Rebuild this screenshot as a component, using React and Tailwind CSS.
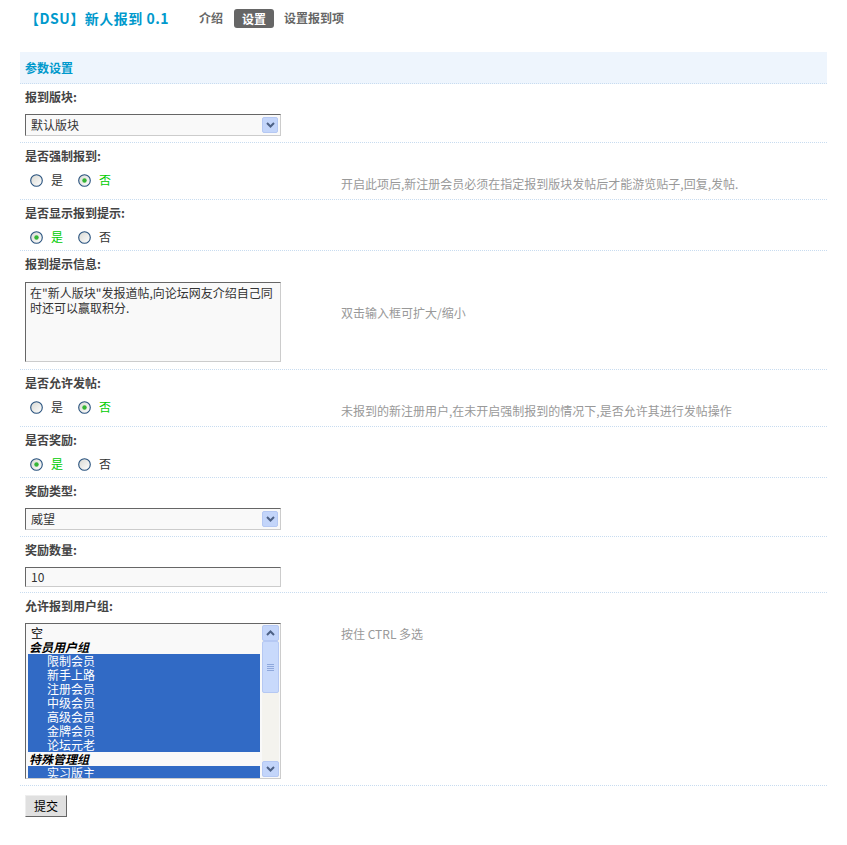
import React from "react";

const font = { fontFamily: '"Noto Sans CJK SC", "Noto Sans", sans-serif' };

const Radio = ({ checked }) => (
  <svg width="13" height="13" viewBox="0 0 13 13" className="shrink-0">
    <defs>
      <linearGradient id="rg" x1="0" y1="0" x2="1" y2="1">
        <stop offset="0" stopColor="#d8d8d2" />
        <stop offset="1" stopColor="#ffffff" />
      </linearGradient>
    </defs>
    <circle cx="6.5" cy="6.5" r="5.8" fill="url(#rg)" stroke="#27517d" strokeWidth="1.1" />
    {checked && <circle cx="6.5" cy="6.5" r="2.2" fill="#35b535" />}
  </svg>
);

const RadioPair = ({ value }) => (
  <div className="flex items-center h-[14px] pl-[5px] text-[12px] leading-[14px]">
    <Radio checked={value} />
    <span className={`ml-[8px] ${value ? "text-[#00cc00]" : "text-[#333]"}`}>是</span>
    <span className="ml-[15px]"><Radio checked={!value} /></span>
    <span className={`ml-[8px] ${!value ? "text-[#00cc00]" : "text-[#333]"}`}>否</span>
  </div>
);

const Select = ({ text }) => (
  <div className="relative w-[256px] h-[22px] bg-[#f9f9f9] border border-t-[#666] border-l-[#666] border-r-[#ccc] border-b-[#ccc] flex items-center pl-[5px] text-[12px] text-[#333]">
    {text}
    <div className="absolute right-[2px] top-[2px] w-[16px] h-[16px] rounded-[2px] bg-[#c3d5fa] border border-[#b5c8f3] flex items-center justify-center">
      <svg width="9" height="6" viewBox="0 0 9 6">
        <path d="M1 1 L4.5 4.5 L8 1" fill="none" stroke="#4d6185" strokeWidth="2" />
      </svg>
    </div>
  </div>
);

const Block = ({ label, children, desc, descPad = "pt-[8px] pb-[8px]" }) => (
  <div className="border-b border-dotted border-[#c8dcf0]">
    <div className="h-[26px] flex items-center pl-[5px] font-bold text-[12px] text-[#444]">{label}</div>
    <div className="flex items-start">
      <div className="w-[321px] pl-[5px] pt-[4px] pb-[6px] shrink-0">{children}</div>
      {desc && <div className={`${descPad} text-[12px] leading-[14px] text-[#999]`}>{desc}</div>}
    </div>
  </div>
);

const groups = [
  { type: "opt", text: "空" },
  { type: "group", text: "会员用户组" },
  { type: "sel", text: "限制会员" },
  { type: "sel", text: "新手上路" },
  { type: "sel", text: "注册会员" },
  { type: "sel", text: "中级会员" },
  { type: "sel", text: "高级会员" },
  { type: "sel", text: "金牌会员" },
  { type: "sel", text: "论坛元老" },
  { type: "group", text: "特殊管理组" },
  { type: "sel", text: "实习版主" },
];

const ScrollBtn = ({ up }) => (
  <div className="w-[17px] h-[16px] rounded-[2px] bg-[#c3d5fa] border border-[#b5c8f3] flex items-center justify-center shrink-0">
    <svg width="9" height="6" viewBox="0 0 9 6">
      <path d={up ? "M1 5 L4.5 1.5 L8 5" : "M1 1 L4.5 4.5 L8 1"} fill="none" stroke="#4d6185" strokeWidth="2" />
    </svg>
  </div>
);

const ListBox = () => (
  <div className="w-[256px] h-[156px] bg-[#f9f9f9] border border-t-[#666] border-l-[#666] border-r-[#ccc] border-b-[#ccc] flex overflow-hidden">
    <div className="flex-1 px-[2px] pt-[2px] overflow-hidden text-[12px] leading-[14px]">
      {groups.map((g, i) => {
        if (g.type === "group")
          return <div key={i} className="h-[14px] pl-[1px] font-bold italic text-black">{g.text}</div>;
        if (g.type === "sel")
          return <div key={i} className="h-[14px] pl-[19px] bg-[#316ac5] text-white">{g.text}</div>;
        return <div key={i} className="h-[14px] pl-[3px] text-black">{g.text}</div>;
      })}
    </div>
    <div className="w-[17px] mr-[1px] mt-[1px] mb-[1px] flex flex-col bg-[#f4f3ee]">
      <ScrollBtn up />
      <div className="h-[52px] rounded-[2px] bg-[#c8d9fb] border border-[#b5c8f3] flex flex-col items-center justify-center gap-[1px]">
        <div className="w-[7px] h-[1px] bg-[#8fa8dc]" />
        <div className="w-[7px] h-[1px] bg-[#8fa8dc]" />
        <div className="w-[7px] h-[1px] bg-[#8fa8dc]" />
        <div className="w-[7px] h-[1px] bg-[#8fa8dc]" />
      </div>
      <div className="flex-1" />
      <ScrollBtn />
    </div>
  </div>
);

export default function App() {
  return (
    <div className="w-full bg-white text-[12px]" style={font}>
      <div className="h-9 flex items-center pl-[25px]">
        <span className="text-[14px] font-bold text-[#0099cc] tracking-[0.5px]">【DSU】新人报到 0.1</span>
        <span className="ml-[30px] font-bold text-[#666]">介绍</span>
        <span className="ml-[11px] px-[8px] h-[19px] leading-[19px] rounded-[3px] bg-[#666] text-white font-bold">设置</span>
        <span className="ml-[10px] font-bold text-[#666]">设置报到项</span>
      </div>

      <div className="mx-[20px] mt-[16px]">
        <div className="h-[32px] bg-[#eef5fd] border-b border-dotted border-[#c8dcf0] flex items-center pl-[5px] font-bold text-[#0099cc]">
          参数设置
        </div>

        <Block label="报到版块:">
          <Select text="默认版块" />
        </Block>

        <Block label="是否强制报到:" desc="开启此项后,新注册会员必须在指定报到版块发帖后才能游览贴子,回复,发帖.">
          <RadioPair value={false} />
        </Block>

        <Block label="是否显示报到提示:">
          <RadioPair value={true} />
        </Block>

        <Block label="报到提示信息:" desc="双击输入框可扩大/缩小" descPad="pt-[29px]">
          <div className="pt-[1px] pb-[1px]">
            <div className="w-[256px] h-[80px] bg-[#f9f9f9] border border-t-[#666] border-l-[#666] border-r-[#ccc] border-b-[#ccc] px-[4px] pt-[2px] text-[12px] leading-[15px] text-[#333]">
              在"新人版块"发报道帖,向论坛网友介绍自己同时还可以赢取积分.
            </div>
          </div>
        </Block>

        <Block label="是否允许发帖:" desc="未报到的新注册用户,在未开启强制报到的情况下,是否允许其进行发帖操作">
          <RadioPair value={false} />
        </Block>

        <Block label="是否奖励:">
          <RadioPair value={true} />
        </Block>

        <Block label="奖励类型:">
          <Select text="威望" />
        </Block>

        <Block label="奖励数量:">
          <div className="-mb-[1px] w-[256px] h-[20px] bg-[#f9f9f9] border border-t-[#666] border-l-[#666] border-r-[#ccc] border-b-[#ccc] flex items-center pl-[5px] text-[12px] text-[#333]">
            10
          </div>
        </Block>

        <Block label="允许报到用户组:" desc="按住 CTRL 多选" descPad="pt-[8px]">
          <ListBox />
        </Block>

        <div className="pt-[9px] pl-[5px] pb-[28px]">
          <button className="w-[42px] h-[22px] bg-[#e0e0e0] border border-t-[#eee] border-l-[#eee] border-r-[#666] border-b-[#666] text-[12px] text-black flex items-center justify-center">
            提交
          </button>
        </div>
      </div>
    </div>
  );
}
